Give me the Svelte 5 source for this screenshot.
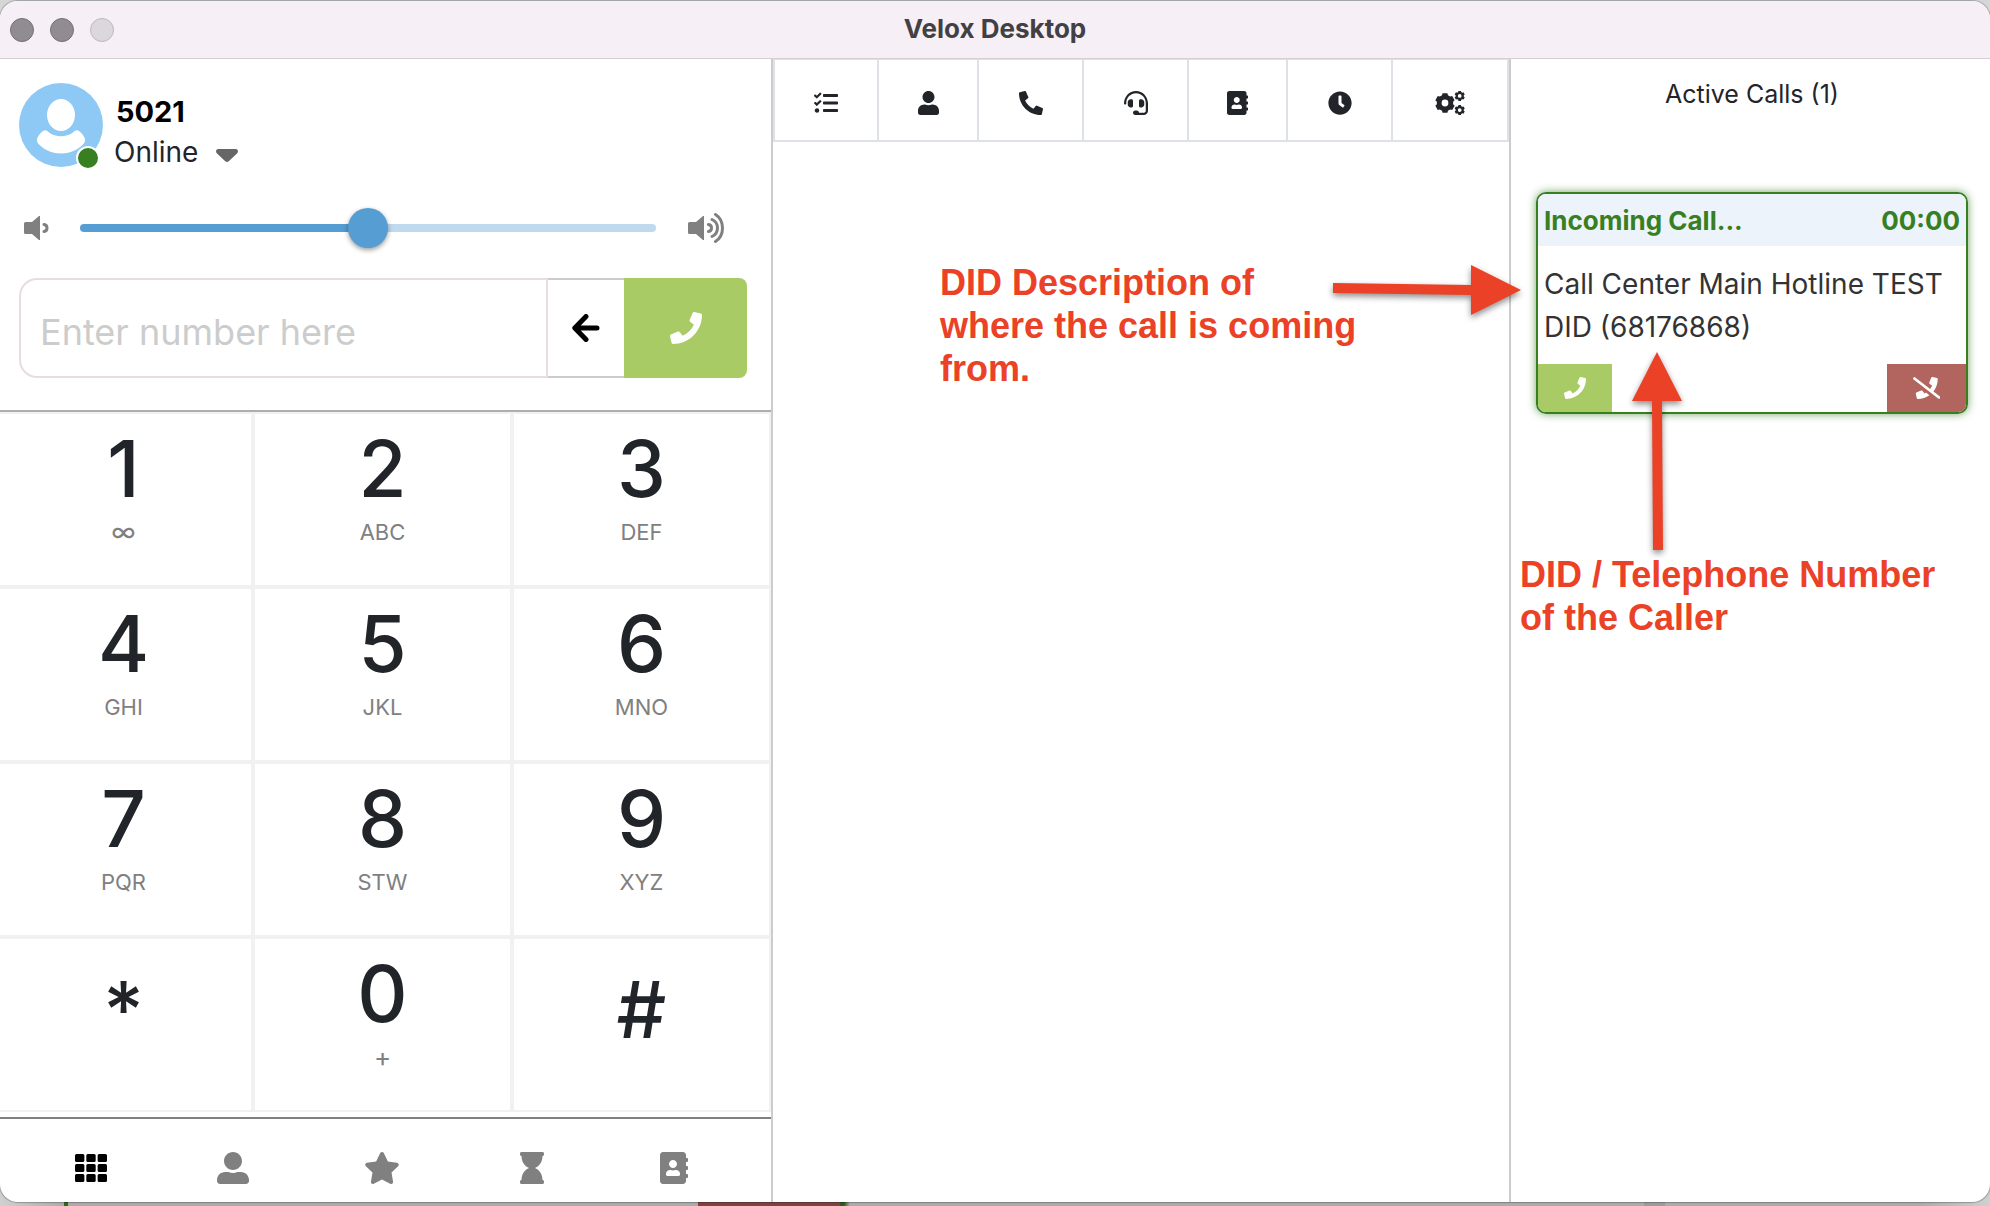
<script lang="ts">
  type Icon = { box: string; d: string };

  const icons: Record<string, Icon> = {
    tasks: {
      box: "0 0 512 512",
      d: "M139.61 35.5a12 12 0 0 0-17 0L58.93 98.81l-22.7-22.12a12 12 0 0 0-17 0L3.53 92.41a12 12 0 0 0 0 17l47.59 47.4a12.78 12.78 0 0 0 17.61 0l15.59-15.62L156.52 69a12.09 12.09 0 0 0 .09-17zm0 159.19a12 12 0 0 0-17 0l-63.68 63.72-22.7-22.1a12 12 0 0 0-17 0L3.53 252a12 12 0 0 0 0 17L51 316.5a12.77 12.77 0 0 0 17.6 0l15.7-15.69 72.2-72.22a12 12 0 0 0 .09-16.9zM64 368c-26.49 0-48.59 21.5-48.59 48S37.53 464 64 464a48 48 0 0 0 0-96zm432 16H208a16 16 0 0 0-16 16v32a16 16 0 0 0 16 16h288a16 16 0 0 0 16-16v-32a16 16 0 0 0-16-16zm0-320H208a16 16 0 0 0-16 16v32a16 16 0 0 0 16 16h288a16 16 0 0 0 16-16V80a16 16 0 0 0-16-16zm0 160H208a16 16 0 0 0-16 16v32a16 16 0 0 0 16 16h288a16 16 0 0 0 16-16v-32a16 16 0 0 0-16-16z",
    },
    user: {
      box: "0 0 448 512",
      d: "M224 256c70.7 0 128-57.3 128-128S294.7 0 224 0 96 57.3 96 128s57.3 128 128 128zm89.6 32h-16.7c-22.2 10.2-46.9 16-72.9 16s-50.6-5.8-72.9-16h-16.7C60.2 288 0 348.2 0 422.4V464c0 26.5 21.5 48 48 48h352c26.5 0 48-21.5 48-48v-41.6c0-74.2-60.2-134.4-134.4-134.4z",
    },
    userWide: {
      box: "0 0 512 512",
      d: "M256 288c79.5 0 144-64.5 144-144S335.5 0 256 0 112 64.5 112 144s64.5 144 144 144zm128 32h-55.1c-22.2 10.2-46.9 16-72.9 16s-50.6-5.8-72.9-16H128C57.3 320 0 377.3 0 448v16c0 26.5 21.5 48 48 48h416c26.5 0 48-21.5 48-48v-16c0-70.7-57.3-128-128-128z",
    },
    phoneAlt: {
      box: "0 0 512 512",
      d: "M497.39 361.8l-112-48a24 24 0 0 0-28 6.9l-49.6 60.6A370.66 370.66 0 0 1 130.6 204.11l60.6-49.6a23.94 23.94 0 0 0 6.9-28l-48-112A24.16 24.16 0 0 0 122.6.61l-104 24A24 24 0 0 0 0 48c0 256.5 207.9 464 464 464a24 24 0 0 0 23.4-18.6l24-104a24.29 24.29 0 0 0-14.01-27.6z",
    },
    phone: {
      box: "0 0 512 512",
      d: "M493.4 24.6l-104-24c-11.3-2.6-22.9 3.3-27.5 13.9l-48 112c-4.2 9.8-1.4 21.3 6.9 28l60.6 49.6c-36 76.7-98.9 140.5-177.2 177.2l-49.6-60.6c-6.8-8.3-18.2-11.1-28-6.9l-112 48C3.9 366.5-2 378.1.6 389.4l24 104C27.1 504.2 36.7 512 48 512c256.1 0 464-207.5 464-464 0-11.2-7.7-20.9-18.6-23.4z",
    },
    phoneSlash: {
      box: "0 0 640 512",
      d: "M268.2 381.4l-49.6-60.6c-6.8-8.3-18.2-11.1-28-6.9l-112 48c-10.7 4.6-16.5 16.1-13.9 27.5l24 104c2.5 10.8 12.1 18.6 23.4 18.6 100.7 0 193.7-32.4 269.7-86.9l-80-61.8c-10.9 6.5-22.1 12.7-33.6 18.1zm365.6 76.7L475.1 335.5C537.9 256.4 576 156.9 576 48c0-11.2-7.7-20.9-18.6-23.4l-104-24c-11.3-2.6-22.9 3.3-27.5 13.9l-48 112c-4.2 9.8-1.4 21.3 6.9 28l60.6 49.6c-12.2 26.1-27.9 50.3-46 72.8L45.5 3.4C38.5-2 28.5-.8 23 6.2L3.4 31.4c-5.4 7-4.2 17 2.8 22.4L594.5 508.6c7 5.4 17 4.2 22.5-2.8l19.6-25.3c5.4-6.8 4.1-16.9-2.8-22.4z",
    },
    headset: {
      box: "0 0 512 512",
      d: "M192 208c0-17.67-14.33-32-32-32h-16c-35.35 0-64 28.65-64 64v48c0 35.35 28.65 64 64 64h16c17.67 0 32-14.33 32-32V208zm176 144c35.35 0 64-28.65 64-64v-48c0-35.35-28.65-64-64-64h-16c-17.67 0-32 14.33-32 32v112c0 17.67 14.33 32 32 32h16zM256 0C113.18 0 4.58 118.83 0 256v16c0 8.84 7.16 16 16 16h16c8.84 0 16-7.16 16-16v-16c0-114.69 93.31-208 208-208s208 93.31 208 208h-.12c.08 2.43.12 165.72.12 165.72 0 23.35-18.93 42.28-42.28 42.28H320c0-26.51-21.49-48-48-48h-32c-26.51 0-48 21.49-48 48s21.49 48 48 48h181.72c49.86 0 90.28-40.42 90.28-90.28V256C507.4 118.83 398.82 0 256 0z",
    },
    book: {
      box: "0 0 448 512",
      d: "M436 160c6.6 0 12-5.4 12-12v-40c0-6.6-5.4-12-12-12h-20V48c0-26.5-21.5-48-48-48H48C21.5 0 0 21.5 0 48v416c0 26.5 21.5 48 48 48h320c26.5 0 48-21.5 48-48v-48h20c6.6 0 12-5.4 12-12v-40c0-6.6-5.4-12-12-12h-20v-64h20c6.6 0 12-5.4 12-12v-40c0-6.6-5.4-12-12-12h-20v-64h20zm-228-32c35.3 0 64 28.7 64 64s-28.7 64-64 64-64-28.7-64-64 28.7-64 64-64zm112 236.8c0 10.6-10 19.2-22.4 19.2H118.4C106 384 96 375.4 96 364.8v-19.2c0-31.8 30.1-57.6 67.2-57.6h5c12.3 5.1 25.7 8 39.8 8s27.6-2.9 39.8-8h5c37.1 0 67.2 25.8 67.2 57.6v19.2z",
    },
    clock: {
      box: "0 0 512 512",
      d: "M256,8C119,8,8,119,8,256S119,504,256,504,504,393,504,256,393,8,256,8Zm92.49,313h0l-20,25a16,16,0,0,1-22.49,2.5h0l-67-49.72a40,40,0,0,1-15-31.23V112a16,16,0,0,1,16-16h32a16,16,0,0,1,16,16V256l58,42.5A16,16,0,0,1,348.49,321Z",
    },
    cogs: {
      box: "0 0 640 512",
      d: gear(213, 256, 214, 176, 72) + gear(527, 106, 112, 88, 40) + gear(527, 406, 112, 88, 40),
    },
    grid: {
      box: "0 0 512 512",
      d: [32, 192, 352].flatMap((y) => [0, 181, 362].map((x) => tile(x, y, 150, 128))).join(""),
    },
    star: {
      box: "0 0 576 512",
      d: "M259.3 17.8L194 150.2 47.9 171.5c-26.2 3.8-36.7 36.1-17.7 54.6l105.7 103-25 145.5c-4.5 26.3 23.2 46 46.4 33.7L288 439.6l130.7 68.7c23.2 12.2 50.9-7.4 46.4-33.7l-25-145.5 105.7-103c19-18.5 8.5-50.8-17.7-54.6L382 150.2 316.7 17.8c-11.7-23.6-45.6-23.9-57.4 0z",
    },
    hourglass: {
      box: "0 0 384 512",
      d: "M360 64c13.255 0 24-10.745 24-24V24c0-13.255-10.745-24-24-24H24C10.745 0 0 10.745 0 24v16c0 13.255 10.745 24 24 24 0 90.965 51.016 167.734 120.842 192C75.016 280.266 24 357.035 24 448c-13.255 0-24 10.745-24 24v16c0 13.255 10.745 24 24 24h336c13.255 0 24-10.745 24-24v-16c0-13.255-10.745-24-24-24 0-90.965-51.016-167.734-120.842-192C308.984 231.734 360 154.965 360 64z",
    },
  };

  // six-toothed wheel with a round hole
  function gear(cx: number, cy: number, outer: number, inner: number, hole: number) {
    const points: string[] = [];
    for (let i = 0; i < 6; i++) {
      for (const [offset, r] of [[-21, inner], [-14, outer], [14, outer], [21, inner]]) {
        const a = ((i * 60 + 90 + offset) * Math.PI) / 180;
        points.push(`${(cx + r * Math.cos(a)).toFixed(1)} ${(cy + r * Math.sin(a)).toFixed(1)}`);
      }
    }
    return `M${points.join("L")}ZM${cx - hole} ${cy}a${hole} ${hole} 0 1 0 ${hole * 2} 0a${hole} ${hole} 0 1 0 ${-hole * 2} 0Z`;
  }

  function tile(x: number, y: number, w: number, h: number) {
    return `M${x + 24} ${y}h${w - 48}q24 0 24 24v${h - 48}q0 24-24 24h${48 - w}q-24 0-24-24v${48 - h}q0-24 24-24z`;
  }

  const tabs = [
    { name: "Tasks", icon: "tasks" },
    { name: "Agents", icon: "user" },
    { name: "Calls", icon: "phoneAlt" },
    { name: "Queues", icon: "headset" },
    { name: "Contacts", icon: "book" },
    { name: "History", icon: "clock" },
    { name: "Settings", icon: "cogs" },
  ];

  const keys = [
    { digit: "1", letters: "∞", sign: true },
    { digit: "2", letters: "ABC" },
    { digit: "3", letters: "DEF" },
    { digit: "4", letters: "GHI" },
    { digit: "5", letters: "JKL" },
    { digit: "6", letters: "MNO" },
    { digit: "7", letters: "PQR" },
    { digit: "8", letters: "STW" },
    { digit: "9", letters: "XYZ" },
    { digit: "*", letters: "" },
    { digit: "0", letters: "+", sign: true },
    { digit: "#", letters: "" },
  ];

  const views = [
    { name: "Dialpad", icon: "grid" },
    { name: "Profile", icon: "userWide" },
    { name: "Favourites", icon: "star" },
    { name: "Recent", icon: "hourglass" },
    { name: "Address book", icon: "book" },
  ];

  let number = $state("");
  let volume = $state(50);
  let view = $state("Dialpad");

  function press(digit: string) {
    number += digit;
  }

  function erase() {
    number = number.slice(0, -1);
  }
</script>

{#snippet glyph(name: string)}
  <svg class="glyph" viewBox={icons[name].box} aria-hidden="true">
    <path fill="currentColor" fill-rule="evenodd" d={icons[name].d} />
  </svg>
{/snippet}

<div class="desktop">
  <div class="window">
    <header class="titlebar">
      <div class="lights">
        <span class="light"></span>
        <span class="light"></span>
        <span class="light off"></span>
      </div>
      <h1>Velox Desktop</h1>
    </header>

    <div class="panes">
      <section class="phone">
        <div class="top">
          <div class="profile">
            <div class="avatar">
              <svg viewBox="0 0 84 84" aria-hidden="true">
                <circle cx="42" cy="42" r="42" fill="#8ec9f6" />
                <ellipse cx="42" cy="32" rx="14" ry="16" fill="#fff" />
                <path
                  fill="#fff"
                  d="M24 48c2-1.500 4-.5 6 1.500 7 5 17 5 24 0 2-2 4-3 6-1.500 3 2 5 5 6 8 .5 2-.5 4-2 5.500-12 12-32 12-44 0-1.500-1.500-2.500-3.500-2-5.500 1-3 3-6 6-8z"
                />
              </svg>
              <span class="presence"></span>
            </div>
            <div class="who">
              <div class="extension">5021</div>
              <button class="status" type="button">
                Online
                <svg class="caret" viewBox="0 0 22 13" aria-hidden="true">
                  <path fill="#666" d="M2 0h18q2 .5 2 2 0 1.500-1 2.500l-8 7.500q-2 2-4 0l-8-7.500q-1-1-1-2.500 0-1.500 2-2z" />
                </svg>
              </button>
            </div>
          </div>

          <div class="volume">
            <svg class="speaker" viewBox="0 0 36 30" aria-hidden="true">
              <path fill="#808080" d="M1.500 9H8l7-6h1v24h-1l-7-6H1.500Q0 21 0 19.500v-9Q0 9 1.500 9z" />
              <path class="wave" d="M20 11.500q3 .5 3 3.500t-3 3.500" />
            </svg>
            <input
              type="range"
              min="0"
              max="100"
              aria-label="Volume"
              bind:value={volume}
              style="--level: {volume}%"
            />
            <svg class="speaker" viewBox="0 0 36 30" aria-hidden="true">
              <path fill="#808080" d="M1.500 9H8l7-6h1v24h-1l-7-6H1.500Q0 21 0 19.500v-9Q0 9 1.500 9z" />
              <path class="wave" d="M20.500 11.500q3 .5 3 3.500t-3 3.500M24 6.500q5.500 2.500 5.500 8.500T24 23.500M27.500 1.500q7 4.500 7 13.500t-7 13.500" />
            </svg>
          </div>

          <div class="dial">
            <input type="text" aria-label="Number" placeholder="Enter number here" bind:value={number} />
            <button class="erase" type="button" aria-label="Erase" onclick={erase}>
              <svg viewBox="0 0 28 28" aria-hidden="true">
                <path
                  fill="none"
                  stroke="#000"
                  stroke-width="5"
                  stroke-linecap="round"
                  stroke-linejoin="round"
                  d="M25 14H3.500M14 2.500L2.800 14 14 25.500"
                />
              </svg>
            </button>
            <button class="call" type="button" aria-label="Call">{@render glyph("phone")}</button>
          </div>
        </div>

        <div class="keypad">
          {#each keys as key}
            <button class="key" class:symbol={!key.letters} type="button" onclick={() => press(key.digit)}>
              <span class="digit">{key.digit}</span>
              {#if key.letters}
                <span class="letters" class:sign={key.sign}>{key.letters}</span>
              {/if}
            </button>
          {/each}
        </div>

        <nav class="views">
          {#each views as item}
            <button
              class="view"
              class:active={view === item.name}
              type="button"
              aria-label={item.name}
              onclick={() => (view = item.name)}
            >
              {@render glyph(item.icon)}
            </button>
          {/each}
        </nav>
      </section>

      <section class="main">
        <nav class="tabs">
          {#each tabs as tab}
            <button class="tab" type="button" aria-label={tab.name}>{@render glyph(tab.icon)}</button>
          {/each}
        </nav>
        <p class="note description">DID Description of<br />where the call is coming<br />from.</p>
        <svg class="arrow right" viewBox="0 0 188 50" aria-hidden="true">
          <path d="M0 18L138 20V0L188 25L138 50V30L0 28Z" />
        </svg>
      </section>

      <aside class="calls">
        <h2>Active Calls (1)</h2>
        <article class="card">
          <header>
            <span>Incoming Call...</span>
            <span>00:00</span>
          </header>
          <p>Call Center Main Hotline TEST DID (68176868)</p>
          <footer>
            <button class="accept" type="button" aria-label="Accept">{@render glyph("phone")}</button>
            <button class="reject" type="button" aria-label="Reject">{@render glyph("phoneSlash")}</button>
          </footer>
        </article>
        <svg class="arrow up" viewBox="0 0 50 198" aria-hidden="true">
          <path d="M25 0L50 49H30L31 198H21L20 49H0Z" />
        </svg>
        <p class="note caller">DID / Telephone Number<br />of the Caller</p>
      </aside>
    </div>
  </div>
</div>

<style>
  :global(body) {
    margin: 0;
    background: #b0b0b0;
  }

  .desktop {
    box-sizing: border-box;
    min-height: 100vh;
    display: flex;
    padding: 1px 0 4px;
    background: linear-gradient(
        to right,
        #d0d0d0,
        #acacac 64px,
        #2c6a1c 64px 68px,
        #acacac 68px 698px,
        #7d4343 698px 840px,
        #2c5a1c 840px 844px,
        #acacac 850px 1644px,
        #9c9ca0 1644px 1665px,
        #acacac 1665px 1920px,
        #d0d0d0
      )
      bottom / 100% 40px no-repeat #d5d7d7;
    color: #212529;
    font-family: Inter, "Liberation Sans", sans-serif;
  }

  button {
    appearance: none;
    margin: 0;
    padding: 0;
    border: 0;
    background: none;
    color: inherit;
    font: inherit;
    cursor: pointer;
  }

  h1,
  h2,
  p {
    margin: 0;
  }

  .window {
    flex: 1;
    display: flex;
    flex-direction: column;
    border-radius: 18px;
    overflow: hidden;
    background: #fff;
    box-shadow: 0 0 1px 1px rgba(0, 0, 0, 0.25);
  }

  .titlebar {
    display: grid;
    grid-template-columns: 1fr auto 1fr;
    align-items: center;
    box-sizing: border-box;
    height: 58px;
    padding: 0 10px;
    border-bottom: 1px solid #d4cfd5;
    background: #f6eff6;
  }

  .lights {
    display: flex;
    gap: 16px;
  }

  .light {
    box-sizing: border-box;
    width: 24px;
    height: 24px;
    border: 1px solid #767076;
    border-radius: 50%;
    background: #918b92;
  }

  .light.off {
    border-color: #bdb8be;
    background: #dcd6dd;
  }

  h1 {
    padding-bottom: 2px;
    color: #434043;
    font-size: 26px;
    line-height: 32px;
    font-weight: 700;
  }

  .panes {
    flex: 1;
    display: grid;
    grid-template-columns: 773fr 738fr 479fr;
  }

  .phone {
    display: flex;
    flex-direction: column;
    min-width: 0;
    border-right: 2px solid #ccc;
    overflow: hidden;
  }

  .top {
    padding: 24px 24px 32px 19px;
    border-bottom: 2px solid #aeaeae;
  }

  .profile {
    display: flex;
    gap: 11px;
  }

  .avatar {
    position: relative;
    width: 84px;
    height: 84px;
  }

  .avatar svg {
    display: block;
  }

  .presence {
    position: absolute;
    right: 3px;
    bottom: -3px;
    width: 20px;
    height: 20px;
    border: 2px solid #fff;
    border-radius: 50%;
    background: #387f22;
  }

  .who {
    padding-top: 9px;
    font-size: 28px;
    line-height: 40px;
  }

  .extension {
    padding-left: 2px;
    color: #000;
    font-size: 29px;
    font-weight: 700;
  }

  .status {
    display: flex;
    align-items: center;
    gap: 18px;
  }

  .caret {
    width: 22px;
    height: 13px;
    margin-top: 6px;
  }

  .volume {
    display: grid;
    grid-template-columns: 36px 1fr 36px;
    align-items: center;
    padding: 36px 23px 30px 5px;
  }

  .speaker {
    width: 36px;
    height: 30px;
  }

  .wave {
    fill: none;
    stroke: #808080;
    stroke-width: 3;
    stroke-linecap: round;
  }

  input[type="range"] {
    appearance: none;
    height: 40px;
    margin: 0 32px 0 20px;
    background: none;
  }

  input[type="range"]::-webkit-slider-runnable-track {
    height: 8px;
    border-radius: 4px;
    background: linear-gradient(to right, #559dd2 var(--level), #bfd9ee var(--level));
  }

  input[type="range"]::-webkit-slider-thumb {
    appearance: none;
    width: 40px;
    height: 40px;
    margin-top: -16px;
    border-radius: 50%;
    background: #559dd2;
    box-shadow: 0 2px 5px rgba(0, 0, 0, 0.4);
  }

  .dial {
    display: grid;
    grid-template-columns: 1fr 76px 123px;
    height: 100px;
  }

  .dial input {
    box-sizing: border-box;
    min-width: 0;
    padding: 8px 19px 0;
    border: 2px solid #e9dcdc;
    border-radius: 18px 0 0 18px;
    background: #fff;
    color: #212529;
    font: inherit;
    font-size: 36px;
  }

  .dial input::placeholder {
    color: #ccc;
  }

  .erase {
    border: solid #ccc;
    border-width: 2px 0;
  }

  .erase svg {
    display: block;
    width: 28px;
    height: 28px;
    margin: auto;
  }

  .call {
    border-radius: 0 8px 8px 0;
    background: #a8cb65;
    color: #fff;
  }

  .call .glyph {
    height: 32px;
  }

  .glyph {
    display: block;
    height: 24px;
    margin: auto;
  }

  .keypad {
    flex: 1;
    display: grid;
    grid-template-columns: repeat(3, 1fr);
    grid-auto-rows: 1fr;
    margin-left: -6px;
  }

  .key {
    display: flex;
    flex-direction: column;
    align-items: center;
    box-sizing: border-box;
    min-height: 120px;
    padding: 7px 0;
    border: 2px solid #f1f1f1;
  }

  .key.symbol {
    padding-top: 23px;
  }

  .digit {
    font-size: 78px;
    line-height: 95px;
    font-weight: 500;
  }

  .letters {
    color: #808080;
    font-size: 22px;
    line-height: 32px;
  }

  .letters.sign {
    font-size: 26px;
  }

  .views {
    display: grid;
    grid-template-columns: 142fr 142fr 156fr 144fr 140fr;
    align-items: center;
    height: 83px;
    margin-top: 5px;
    padding: 0 27px 0 20px;
    border-top: 2px solid #808080;
    color: #808080;
  }

  .view {
    padding: 14px 0 0;
    height: 100%;
    box-sizing: border-box;
  }

  .view .glyph {
    height: 32px;
  }

  .view.active {
    color: #000;
  }

  .main {
    position: relative;
    border-right: 2px solid #ccc;
  }

  .tabs {
    display: grid;
    grid-template-columns: 104fr 100fr 105fr 105fr 99fr 105fr 116fr;
    box-sizing: border-box;
    height: 83px;
    border: solid #dee2e6;
    border-width: 1px 0 2px 2px;
  }

  .tab {
    border-right: 2px solid #dee2e6;
    padding-top: 5px;
  }

  .calls {
    position: relative;
    padding: 19px 22px 20px 25px;
  }

  h2 {
    font-size: 25px;
    line-height: 32px;
    font-weight: 400;
    text-align: center;
  }

  .card {
    margin-top: 82px;
    border: 2px solid #387f22;
    border-radius: 10px;
    box-shadow: 0 0 8px rgba(56, 127, 34, 0.7);
    overflow: hidden;
  }

  .card header {
    display: flex;
    justify-content: space-between;
    padding: 9px 6px 7px;
    background: #ecf3fa;
    color: #387f22;
    font-size: 26px;
    line-height: 36px;
    font-weight: 700;
  }

  .card p {
    padding: 17px 6px 15px;
    color: #333;
    font-size: 28px;
    line-height: 43px;
  }

  .card footer {
    display: flex;
    justify-content: space-between;
    height: 48px;
    color: #fff;
  }

  .accept {
    width: 74px;
    background: #a8cb65;
  }

  .reject {
    width: 79px;
    background: #b2645f;
  }

  .card .glyph {
    height: 22px;
  }

  .note {
    position: absolute;
    color: #eb4126;
    font-family: "Liberation Sans", Arial, sans-serif;
    font-size: 36px;
    line-height: 43px;
    font-weight: 700;
    white-space: nowrap;
  }

  .description {
    top: 202px;
    left: 167px;
  }

  .caller {
    top: 494px;
    left: 9px;
  }

  .arrow {
    position: absolute;
    z-index: 1;
    overflow: visible;
    fill: #eb4126;
    filter: drop-shadow(0 3px 3px rgba(0, 0, 0, 0.45));
  }

  .arrow.right {
    top: 206px;
    right: -12px;
    width: 188px;
    height: 50px;
  }

  .arrow.up {
    top: 293px;
    left: 121px;
    width: 50px;
    height: 198px;
  }
</style>
